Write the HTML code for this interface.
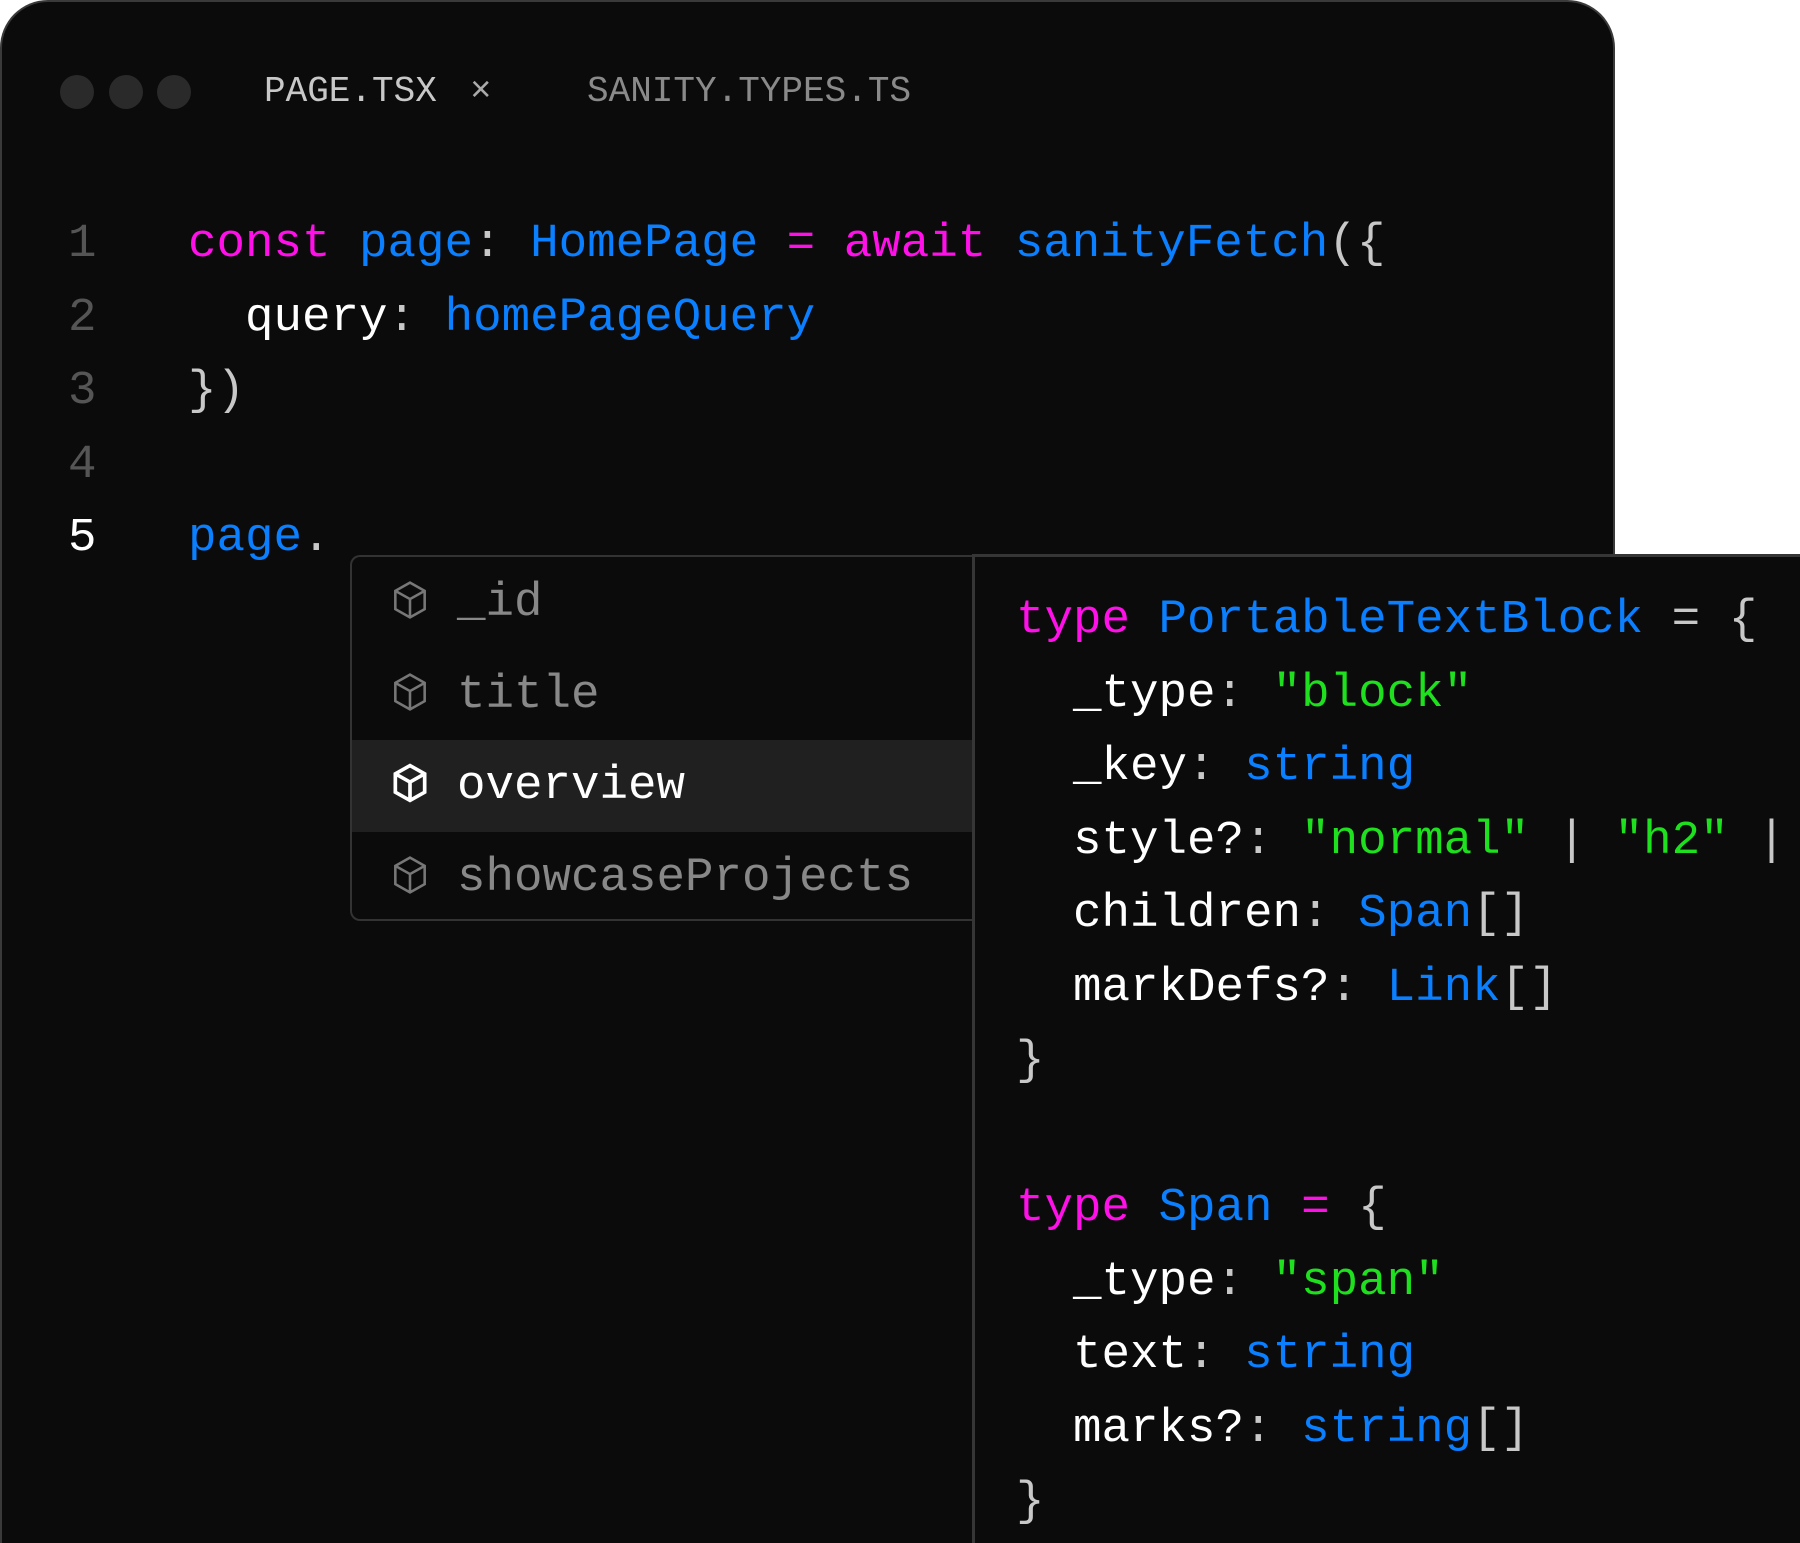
<!DOCTYPE html>
<html><head><meta charset="utf-8"><style>
html,body{margin:0;padding:0;background:#fff;width:1800px;height:1543px;overflow:hidden;}
body{position:relative;font-family:"Liberation Mono","DejaVu Sans Mono",monospace;}
.win{position:absolute;left:0;top:0;width:1615px;height:1543px;background:#0b0b0b;border-radius:48px 48px 0 0;border:2px solid #3a3a3a;border-bottom:none;box-sizing:border-box;}
.dot{position:absolute;top:73px;width:34px;height:34px;border-radius:50%;background:#2a2a2a;}
.tab{position:absolute;top:70px;font-size:36px;line-height:40px;white-space:pre;}
.ln{position:absolute;font-size:47.5px;line-height:60px;white-space:pre;}
.num{position:absolute;left:66px;font-size:47.5px;line-height:60px;color:#555;}
.k{color:#ff10e8}.b{color:#0a7fff}.w{color:#fff}.p{color:#c8c8c8}.g{color:#1ee01e}
.dd{position:absolute;left:350px;top:555px;width:624px;height:366px;border:2px solid #333;border-right:none;border-radius:10px 0 0 10px;background:#0b0b0b;box-sizing:border-box;}
.item{position:absolute;left:0;width:622px;height:92px;}
.item svg{position:absolute;left:36px;top:20px;}
.item span{position:absolute;left:105px;top:16px;font-size:47.5px;line-height:60px;white-space:pre;}
.panel{position:absolute;left:972px;top:554px;width:828px;height:989px;background:#0b0b0b;border-top:3px solid #363636;border-left:3px solid #363636;box-sizing:border-box;overflow:hidden;}
</style></head><body>
<div class="win">
 <div class="dot" style="left:58px"></div><div class="dot" style="left:107px"></div><div class="dot" style="left:155px"></div>
 <div class="tab" style="left:262px;color:#c8c8c8">PAGE.TSX</div>
 <div class="tab" style="left:468px;color:#aaa">×</div>
 <div class="tab" style="left:585px;color:#8a8a8a">SANITY.TYPES.TS</div>
 <div class="num" style="top:212px">1</div>
 <div class="num" style="top:286px">2</div>
 <div class="num" style="top:359px">3</div>
 <div class="num" style="top:433px">4</div>
 <div class="num" style="top:506px;color:#fff">5</div>
 <div class="ln" style="left:186px;top:212px"><span class="k">const</span> <span class="b">page</span><span class="p">:</span> <span class="b">HomePage</span> <span class="k">=</span> <span class="k">await</span> <span class="b">sanityFetch</span><span class="p">({</span></div>
 <div class="ln" style="left:186px;top:286px">  <span class="w">query</span><span class="p">:</span> <span class="b">homePageQuery</span></div>
 <div class="ln" style="left:186px;top:359px"><span class="p">})</span></div>
 <div class="ln" style="left:186px;top:506px"><span class="b">page</span><span class="p">.</span></div>
</div>
<div class="dd">
 <div class="item" style="top:0"><svg width="44" height="46" viewBox="0 0 24 24" fill="none" stroke="#777" stroke-width="1.4"><path d="M12 2.5l8 4.5v10l-8 4.5-8-4.5V7z M4 7l8 4.5 8-4.5 M12 11.5v10"/></svg><span style="color:#888">_id</span></div>
 <div class="item" style="top:92px"><svg width="44" height="46" viewBox="0 0 24 24" fill="none" stroke="#777" stroke-width="1.4"><path d="M12 2.5l8 4.5v10l-8 4.5-8-4.5V7z M4 7l8 4.5 8-4.5 M12 11.5v10"/></svg><span style="color:#888">title</span></div>
 <div class="item" style="top:183px;height:92px;background:#202020"><svg width="44" height="46" viewBox="0 0 24 24" fill="none" stroke="#fff" stroke-width="2"><path d="M12 2.5l8 4.5v10l-8 4.5-8-4.5V7z M4 7l8 4.5 8-4.5 M12 11.5v10"/></svg><span style="color:#fff">overview</span></div>
 <div class="item" style="top:275px"><svg width="44" height="46" viewBox="0 0 24 24" fill="none" stroke="#777" stroke-width="1.4"><path d="M12 2.5l8 4.5v10l-8 4.5-8-4.5V7z M4 7l8 4.5 8-4.5 M12 11.5v10"/></svg><span style="color:#888">showcaseProjects</span></div>
</div>
<div class="panel">
 <div class="ln" style="left:41px;top:33px"><span class="k">type</span> <span class="b">PortableTextBlock</span> <span class="p">=</span> <span class="p">{</span></div>
 <div class="ln" style="left:41px;top:107px">  <span class="w">_type</span><span class="p">:</span> <span class="g">"block"</span></div>
 <div class="ln" style="left:41px;top:180px">  <span class="w">_key</span><span class="p">:</span> <span class="b">string</span></div>
 <div class="ln" style="left:41px;top:254px">  <span class="w">style?</span><span class="p">:</span> <span class="g">"normal"</span> <span class="p">|</span> <span class="g">"h2"</span> <span class="p">|</span></div>
 <div class="ln" style="left:41px;top:327px">  <span class="w">children</span><span class="p">:</span> <span class="b">Span</span><span class="p">[]</span></div>
 <div class="ln" style="left:41px;top:401px">  <span class="w">markDefs?</span><span class="p">:</span> <span class="b">Link</span><span class="p">[]</span></div>
 <div class="ln" style="left:41px;top:474px"><span class="p">}</span></div>
 <div class="ln" style="left:41px;top:621px"><span class="k">type</span> <span class="b">Span</span> <span class="k">=</span> <span class="p">{</span></div>
 <div class="ln" style="left:41px;top:695px">  <span class="w">_type</span><span class="p">:</span> <span class="g">"span"</span></div>
 <div class="ln" style="left:41px;top:768px">  <span class="w">text</span><span class="p">:</span> <span class="b">string</span></div>
 <div class="ln" style="left:41px;top:842px">  <span class="w">marks?</span><span class="p">:</span> <span class="b">string</span><span class="p">[]</span></div>
 <div class="ln" style="left:41px;top:915px"><span class="p">}</span></div>
</div>
</body></html>
